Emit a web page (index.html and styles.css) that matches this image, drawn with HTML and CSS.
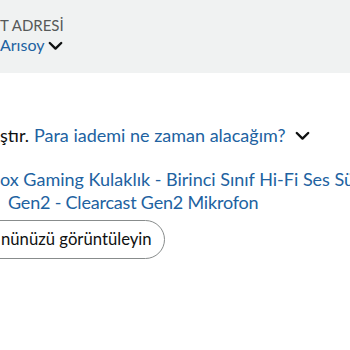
FILE: index.html
```html
<!DOCTYPE html>
<html lang="tr">
<head>
<meta charset="utf-8">
<link rel="stylesheet" href="styles.css">
</head>
<body>
<div class="viewport">
  <header class="address">
    <div class="label">T ADRESİ</div>
    <div class="name-row">
      <span class="name">Arısoy</span>
      <svg class="chev chev-sm" width="15" height="10" viewBox="0 0 15 10"><path d="M1.8 2 L7.5 7.6 L13.2 2" fill="none" stroke="#0f1111" stroke-width="2.4" stroke-linecap="round" stroke-linejoin="round"/></svg>
    </div>
  </header>
  <main class="content">
    <div class="status">
      <span class="status-text">ştır.</span>
      <span class="link">Para iademi ne zaman alacağım?</span>
      <svg class="chev chev-md" width="15" height="10" viewBox="0 0 15 10"><path d="M1.8 2 L7.5 7.6 L13.2 2" fill="none" stroke="#0f1111" stroke-width="2.4" stroke-linecap="round" stroke-linejoin="round"/></svg>
    </div>
    <div class="product">
      <div class="pline">ox Gaming Kulaklık - Birinci Sınıf Hi-Fi Ses Sü</div>
      <div class="pline l2">Gen2 - Clearcast Gen2 Mikrofon</div>
    </div>
    <div class="btn">nünüzü görüntüleyin</div>
  </main>
</div>
</body>
</html>
```
FILE: styles.css
```css
html, body {
  margin: 0;
  padding: 0;
  background: #ffffff;
  overflow: hidden;
}
body {
  width: 350px;
  height: 350px;
  font-family: Lato, "Noto Sans", sans-serif;
  color: #0f1111;
}
.viewport {
  width: 350px;
  overflow: hidden;
}
.address {
  background: #f0f2f2;
  height: 73px;
  box-sizing: border-box;
  padding-top: 16px;
  white-space: nowrap;
}
.label {
  font-size: 15px;
  color: #565959;
  line-height: 18px;
}
.name-row {
  display: flex;
  align-items: center;
  gap: 4px;
  height: 22px;
}
.name {
  font-size: 16px;
  color: #2162a1;
  line-height: 22px;
}
.chev-sm { margin-top: 2px; }
.content {
  padding-top: 50px;
  white-space: nowrap;
}
.status {
  display: flex;
  align-items: center;
  gap: 5px;
  font-size: 18px;
  line-height: 24px;
  height: 24px;
}
.status-text { color: #0f1111; }
.link { color: #2162a1; }
.chev-md { margin-left: 5px; margin-top: 2px; }
.product {
  margin-top: 21px;
  font-size: 18px;
  line-height: 23px;
  color: #2162a1;
}
.l2 {
  padding-left: 8px;
  letter-spacing: -0.2px;
}
.btn {
  display: inline-block;
  box-sizing: border-box;
  margin-top: 6px;
  margin-left: -30px;
  border: 1px solid #888c8c;
  border-radius: 20px;
  padding: 0 12px 0 30px;
  height: 39px;
  line-height: 37px;
  font-size: 16.7px;
  color: #0f1111;
}
```
